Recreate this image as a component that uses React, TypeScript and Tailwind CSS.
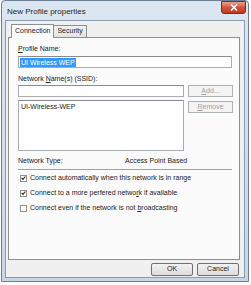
import React from "react";

function Check({ checked }: { checked: boolean }) {
  return (
    <div className="w-[7px] h-[7px] border border-[#8f8f8f] bg-white flex items-center justify-center shrink-0">
      {checked && (
        <svg width="6" height="6" viewBox="0 0 6 6">
          <path d="M0.8 3 L2.4 4.6 L5.2 1.2" stroke="#1f1f1f" strokeWidth="1.3" fill="none" />
        </svg>
      )}
    </div>
  );
}

export default function App() {
  return (
    <div
      className="w-[251px] h-[285px] bg-white"
      style={{ fontFamily: '"Liberation Sans", Arial, sans-serif' }}
    >
      <div className="w-[248px] h-[282px] ml-[1px] border border-[#6d7f92] rounded-t-[4px] bg-gradient-to-b from-[#dbe6f1] to-[#c7d7e8] flex flex-col px-[3px] pb-[3px]">
        {/* title bar */}
        <div className="h-[19px] flex items-start justify-between">
          <div className="text-[8px] text-[#1e1e1e] mt-[5px] ml-[2px]">New Profile properties</div>
          <div className="w-[25px] h-[13px] mr-[-1px] rounded-b-[3px] border border-[#7a2a22] bg-gradient-to-b from-[#e8a08f] via-[#d2533c] to-[#c4371f] flex items-center justify-center">
            <svg width="8" height="7" viewBox="0 0 8 7">
              <path d="M1 0.5 L7 6.5 M7 0.5 L1 6.5" stroke="white" strokeWidth="1.6" />
            </svg>
          </div>
        </div>
        {/* client area */}
        <div className="flex-1 border border-[#8b9bab] bg-[#f0f0f0] flex flex-col px-[2px]">
          {/* tabs */}
          <div className="flex items-end h-[15px] ml-[3px] mt-[1px]">
            <div className="h-[14px] px-[3px] border border-b-0 border-[#8e8f8f] bg-[#fbfbfb] text-[7px] text-[#222] flex items-center relative z-10 mb-[-1px]">
              Connection
            </div>
            <div className="h-[12px] px-[3px] border border-b-0 border-l-0 border-[#8e8f8f] bg-gradient-to-b from-[#f2f2f2] to-[#e3e3e3] text-[7px] text-[#222] flex items-center">
              Security
            </div>
          </div>
          {/* panel */}
          <div className="h-[223px] w-[232px] border border-[#8e8f8f] bg-[#fbfbfb] flex flex-col px-[9px] text-[7px] text-[#222]">
            <div className="mt-[7px] leading-[8px]">
              <span className="underline">P</span>rofile Name:
            </div>
            <div className="mt-[3px] h-[12px] w-[214px] border border-[#abadb3] border-t-[#8a8c92] bg-white flex items-center px-[1px]">
              <span className="bg-[#3399ff] text-white leading-[9px] px-[1px]">UI Wireless WEP</span>
            </div>
            <div className="mt-[7px] leading-[8px]">
              Network <span className="underline">N</span>ame(s) (SSID):
            </div>
            <div className="mt-[2px] flex gap-[4px]">
              <div className="flex flex-col">
                <div className="h-[12px] w-[166px] border border-[#abadb3] border-t-[#8a8c92] bg-white" />
                <div className="mt-[3px] h-[51px] w-[166px] border border-[#abadb3] border-t-[#8a8c92] bg-white px-[2px] pt-[2px] leading-[8px]">
                  UI-Wireless-WEP
                </div>
              </div>
              <div className="flex flex-col gap-[4px]">
                <div className="h-[12px] w-[45px] border border-[#adb2b5] bg-[#f4f4f4] text-[#a0a0a0] flex items-center justify-center">
                  <span><span className="underline">A</span>dd...</span>
                </div>
                <div className="h-[12px] w-[45px] border border-[#adb2b5] bg-[#f4f4f4] text-[#a0a0a0] flex items-center justify-center">
                  <span><span className="underline">R</span>emove</span>
                </div>
              </div>
            </div>
            <div className="mt-[6px] flex leading-[8px]">
              <div className="w-[107px]">Network Type:</div>
              <div>Access Point Based</div>
            </div>
            <div className="mt-[4px] h-[2px] w-[214px] border-t border-[#a0a0a0] border-b border-b-white" />
            <div className="mt-[3px] flex flex-col gap-[7px] ml-[2px]">
              <div className="flex items-center gap-[3px] leading-[8px]">
                <Check checked />
                <span>Connect automatically when this network is in range</span>
              </div>
              <div className="flex items-center gap-[3px] leading-[8px]">
                <Check checked />
                <span>Connect to a more perfered netwo<span className="underline">r</span>k if available</span>
              </div>
              <div className="flex items-center gap-[3px] leading-[8px]">
                <Check checked={false} />
                <span>Connect even if the network is not <span className="underline">b</span>roadcasting</span>
              </div>
            </div>
          </div>
          {/* buttons */}
          <div className="flex justify-end gap-[4px] mt-[3px] mr-[3px]">
            <div className="h-[13px] w-[42px] border border-[#707070] rounded-[2px] bg-gradient-to-b from-[#f2f2f2] to-[#dddddd] text-[7px] text-[#222] flex items-center justify-center">
              OK
            </div>
            <div className="h-[13px] w-[42px] border border-[#707070] rounded-[2px] bg-gradient-to-b from-[#f2f2f2] to-[#dddddd] text-[7px] text-[#222] flex items-center justify-center">
              Cancel
            </div>
          </div>
        </div>
      </div>
    </div>
  );
}
